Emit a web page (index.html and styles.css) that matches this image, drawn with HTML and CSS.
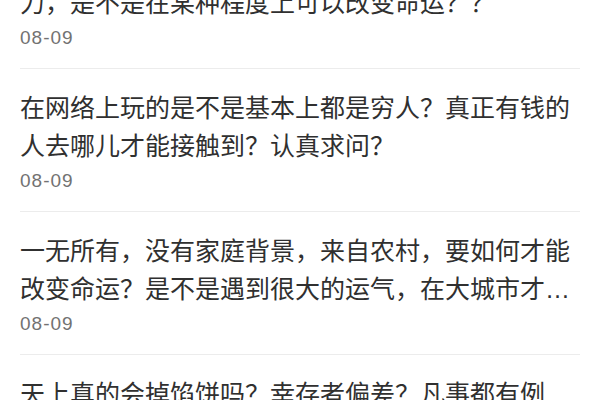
FILE: index.html
```html
<!DOCTYPE html>
<html lang="zh-CN">
<head>
<meta charset="utf-8">
<title>列表</title>
<link rel="stylesheet" href="styles.css">
</head>
<body>
<ul class="feed">
  <li class="item">
    <p class="title">一个普通人如果足够聪明，而且又肯付出很多的努力，是不是在某种程度上可以改变命运？？</p>
    <span class="date">08-09</span>
  </li>
  <li class="item">
    <p class="title">在网络上玩的是不是基本上都是穷人？真正有钱的人去哪儿才能接触到？认真求问？</p>
    <span class="date">08-09</span>
  </li>
  <li class="item">
    <p class="title">一无所有，没有家庭背景，来自农村，要如何才能改变命运？是不是遇到很大的运气，在大城市才能有出头的机会？</p>
    <span class="date">08-09</span>
  </li>
  <li class="item">
    <p class="title">天上真的会掉馅饼吗？幸存者偏差？凡事都有例外，普通人到底应该怎么看待这些成功故事？</p>
    <span class="date">08-09</span>
  </li>
</ul>
</body>
</html>
```
FILE: styles.css
```css
html, body {
  margin: 0;
  padding: 0;
  background: #ffffff;
}

body {
  overflow: hidden;
}

.feed {
  list-style: none;
  margin: -74px 0 0;
  padding: 0 20px;
}

.item {
  display: flex;
  flex-direction: column;
  padding: 19.5px 0 19px;
  border-bottom: 1px solid #ececec;
}

.title {
  margin: 0;
  font-family: "Liberation Sans", "Noto Sans CJK SC", sans-serif;
  font-size: 25px;
  line-height: 38px;
  color: #303030;
  display: -webkit-box;
  -webkit-box-orient: vertical;
  -webkit-line-clamp: 2;
  overflow: hidden;
}

.date {
  margin-top: 4px;
  font-family: "Liberation Sans", "Noto Sans CJK SC", sans-serif;
  font-size: 19px;
  line-height: 23.5px;
  letter-spacing: 1px;
  color: #727272;
}
```
